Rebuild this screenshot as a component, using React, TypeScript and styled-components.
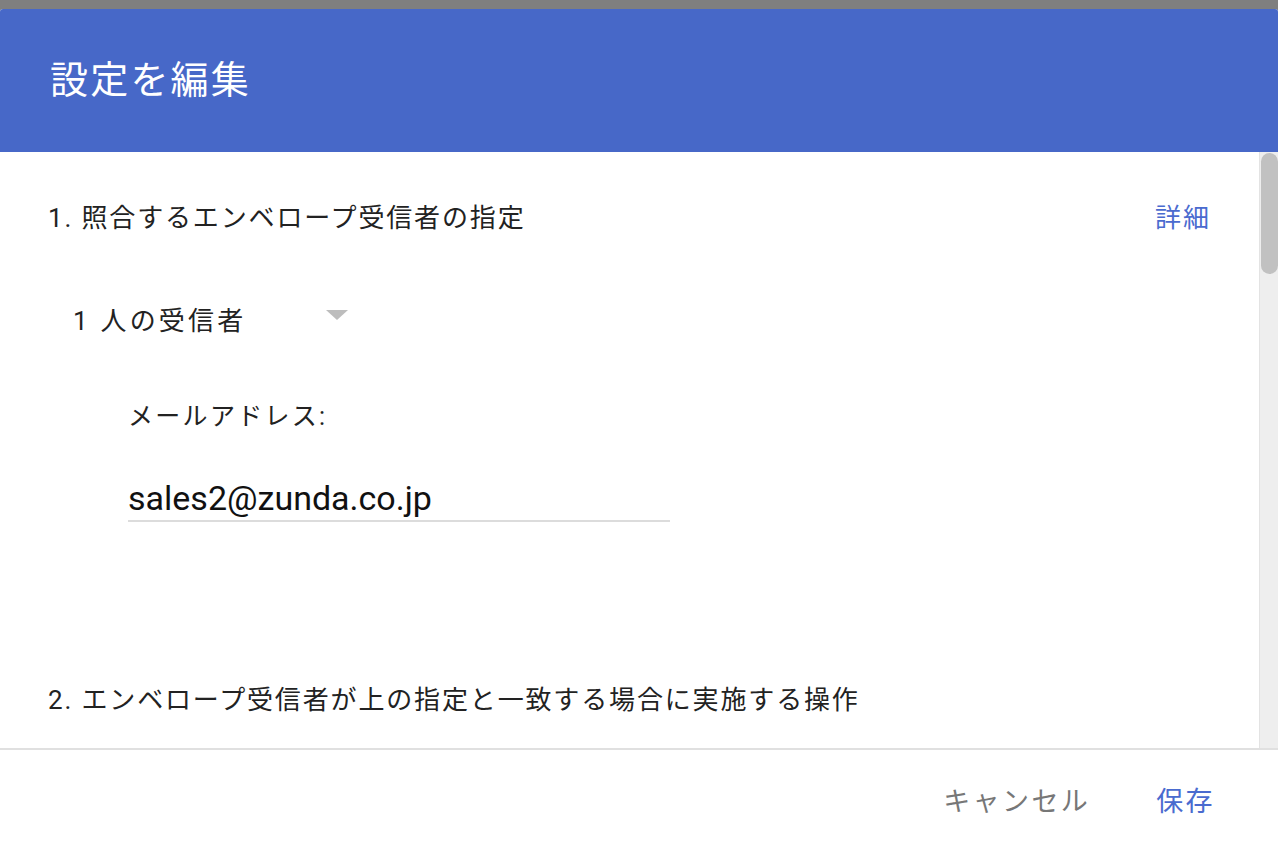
import styled, { createGlobalStyle } from "styled-components";

const GlobalStyle = createGlobalStyle`
  html, body {
    margin: 0;
    padding: 0;
  }
  body {
    font-family: Roboto, "Noto Sans CJK JP", sans-serif;
    color: #222;
  }
`;

const Page = styled.div`
  width: 1278px;
  height: 854px;
  background: #7f7f7f;
  padding-top: 9px;
  box-sizing: border-box;
  display: flex;
  flex-direction: column;
  overflow: hidden;
`;

const Dialog = styled.div`
  flex: 1;
  display: flex;
  flex-direction: column;
  background: #fff;
  border-radius: 3px 3px 0 0;
  overflow: hidden;
`;

const Header = styled.header`
  height: 143px;
  flex-shrink: 0;
  background: #4768c8;
  display: flex;
  align-items: center;
  padding-left: 50px;
  padding-bottom: 8px;
  box-sizing: border-box;
`;

const Title = styled.h1`
  margin: 0;
  font-weight: 400;
  font-size: 38px;
  letter-spacing: 2.2px;
  color: #fff;
`;

const Body = styled.div`
  height: 596px;
  display: flex;
  flex-shrink: 0;
`;

const Content = styled.div`
  flex: 1;
  padding: 0 48px;
  display: flex;
  flex-direction: column;
`;

const SectionHead = styled.div<{ top: number }>`
  display: flex;
  justify-content: space-between;
  align-items: center;
  height: 38px;
  margin-top: ${(p) => p.top}px;
  font-size: 26px;
  letter-spacing: 1.85px;
  color: #222;
`;

const LinkButton = styled.span<{ muted?: boolean }>`
  font-size: 26px;
  letter-spacing: 2px;
  color: ${(p) => (p.muted ? "#777" : "#4a6bcf")};
  cursor: pointer;
`;

const FooterButton = styled(LinkButton)`
  font-size: 27px;
  letter-spacing: 2.4px;
`;

const Dropdown = styled.div`
  display: flex;
  align-items: center;
  justify-content: space-between;
  width: 275px;
  height: 38px;
  margin-top: 65px;
  margin-left: 25px;
  font-size: 26px;
  letter-spacing: 3.2px;
  color: #222;
`;

const Caret = styled.span`
  width: 0;
  height: 0;
  border-left: 11px solid transparent;
  border-right: 11px solid transparent;
  border-top: 10px solid #bdbdbd;
  margin-bottom: 6px;
`;

const Field = styled.div`
  margin-left: 80px;
  margin-top: 63px;
  display: flex;
  flex-direction: column;
`;

const Label = styled.label`
  height: 34px;
  line-height: 34px;
  font-size: 25px;
  letter-spacing: 2.3px;
  color: #222;
`;

const Input = styled.input`
  margin-top: 42px;
  width: 542px;
  height: 46px;
  box-sizing: border-box;
  border: none;
  border-bottom: 2px solid #dcdcdc;
  padding: 0;
  font-family: Roboto, sans-serif;
  font-size: 34px;
  color: #111;
  outline: none;
  background: transparent;
`;

const Track = styled.div`
  width: 18px;
  background: #eeeeee;
  border-left: 1px solid #e3e3e3;
  padding-top: 1px;
  display: flex;
  justify-content: flex-end;
`;

const Thumb = styled.div`
  width: 17px;
  height: 121px;
  background: #c1c1c1;
  border-radius: 9px;
`;

const Footer = styled.footer`
  flex: 1;
  border-top: 2px solid #e0e0e0;
  display: flex;
  justify-content: flex-end;
  align-items: center;
  gap: 66px;
  padding-right: 63px;
  padding-bottom: 6px;
`;

export default function App() {
  return (
    <>
      <GlobalStyle />
      <Page>
        <Dialog>
          <Header>
            <Title>設定を編集</Title>
          </Header>
          <Body>
            <Content>
              <SectionHead top={44}>
                <span>1. 照合するエンベロープ受信者の指定</span>
                <LinkButton>詳細</LinkButton>
              </SectionHead>
              <Dropdown>
                <span>1 人の受信者</span>
                <Caret />
              </Dropdown>
              <Field>
                <Label>メールアドレス:</Label>
                <Input defaultValue="sales2@zunda.co.jp" />
              </Field>
              <SectionHead top={156}>
                <span>2. エンベロープ受信者が上の指定と一致する場合に実施する操作</span>
              </SectionHead>
            </Content>
            <Track>
              <Thumb />
            </Track>
          </Body>
          <Footer>
            <FooterButton muted>キャンセル</FooterButton>
            <FooterButton>保存</FooterButton>
          </Footer>
        </Dialog>
      </Page>
    </>
  );
}
